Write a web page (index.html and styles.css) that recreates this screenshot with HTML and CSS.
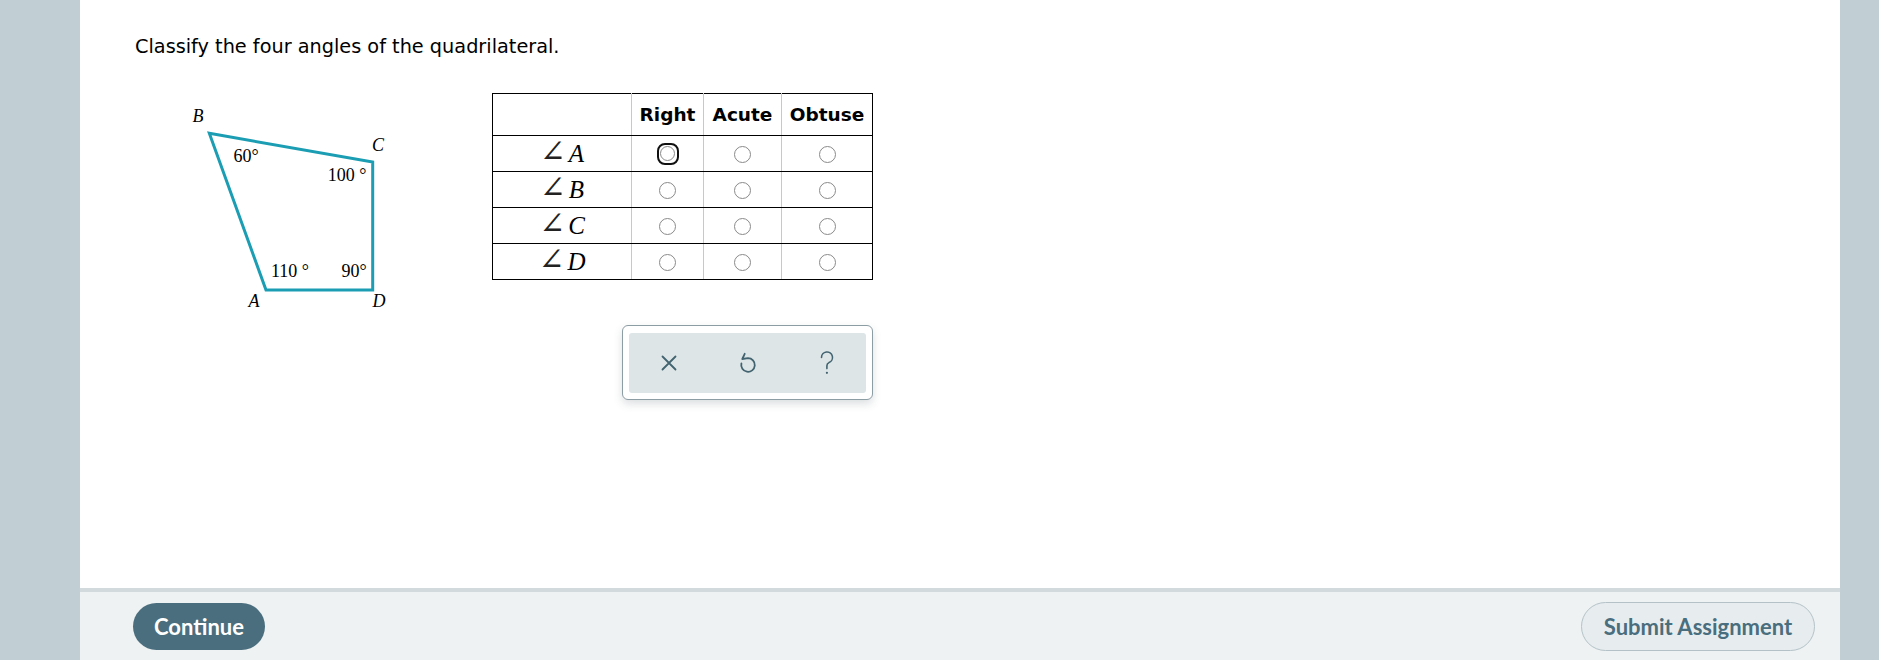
FILE: index.html
```html
<!DOCTYPE html>
<html>
<head>
<meta charset="utf-8">
<link rel="stylesheet" href="styles.css">
</head>
<body>
<div class="page">
  <div class="side side-left"></div>
  <div class="main">
    <div class="content">
      <p class="question">Classify the four angles of the quadrilateral.</p>
      <div class="work">
        <svg class="figure" width="300" height="220" viewBox="0 0 300 220">
          <polygon points="74.3,33.3 237.7,62 237.7,190 131,190" fill="none" stroke="#1b9db3" stroke-width="3" stroke-linejoin="miter"/>
          <g class="lbl">
            <text x="63" y="22" class="it">B</text>
            <text x="243" y="51" class="it">C</text>
            <text x="119" y="207" class="it">A</text>
            <text x="244" y="207" class="it">D</text>
            <text x="111" y="62">60°</text>
            <text x="212" y="81">100 °</text>
            <text x="155" y="177">110 °</text>
            <text x="219" y="177">90°</text>
          </g>
        </svg>
        <div class="answer">
          <table class="grid">
            <colgroup>
              <col class="c0"><col class="c1"><col class="c2"><col class="c3">
            </colgroup>
            <tr class="head">
              <th></th><th>Right</th><th>Acute</th><th>Obtuse</th>
            </tr>
            <tr>
              <td class="ang"><span class="sym">∠</span><i>A</i></td>
              <td><span class="focus"><span class="radio"></span></span></td>
              <td><span class="radio"></span></td>
              <td><span class="radio"></span></td>
            </tr>
            <tr>
              <td class="ang"><span class="sym">∠</span><i>B</i></td>
              <td><span class="radio"></span></td>
              <td><span class="radio"></span></td>
              <td><span class="radio"></span></td>
            </tr>
            <tr>
              <td class="ang"><span class="sym">∠</span><i>C</i></td>
              <td><span class="radio"></span></td>
              <td><span class="radio"></span></td>
              <td><span class="radio"></span></td>
            </tr>
            <tr>
              <td class="ang"><span class="sym">∠</span><i>D</i></td>
              <td><span class="radio"></span></td>
              <td><span class="radio"></span></td>
              <td><span class="radio"></span></td>
            </tr>
          </table>
          <div class="tools">
            <div class="tools-inner">
              <button class="tool" aria-label="Clear">
                <svg width="18" height="18" viewBox="0 0 18 18"><path d="M2.5 2.5 L15.5 15.5 M15.5 2.5 L2.5 15.5" stroke="#42636f" stroke-width="1.8" fill="none" stroke-linecap="round"/></svg>
              </button>
              <button class="tool" aria-label="Undo">
                <svg width="20" height="24" viewBox="0 0 20 24"><path d="M3.4 12.4 A6.8 6.8 0 1 0 10 7.2 L4.3 8 L6.7 2.8" stroke="#42636f" stroke-width="1.8" fill="none" stroke-linecap="round" stroke-linejoin="round"/></svg>
              </button>
              <button class="tool" aria-label="Help">
                <svg width="16" height="28" viewBox="0 0 16 28"><path d="M2.5 8.5 A5.5 5.5 0 1 1 10 13.6 C8.6 14.3 7.9 15.3 7.9 16.8 L7.9 19.6" stroke="#42636f" stroke-width="1.6" fill="none" stroke-linecap="round"/><circle cx="7.9" cy="23.8" r="1.1" fill="#42636f"/></svg>
              </button>
            </div>
          </div>
        </div>
      </div>
    </div>
    <div class="footer">
      <button class="btn btn-primary">Continue</button>
      <button class="btn btn-secondary">Submit Assignment</button>
    </div>
  </div>
  <div class="side side-right"></div>
</div>
</body>
</html>
```
FILE: styles.css
```css
html, body {
  margin: 0;
  padding: 0;
}
body {
  background: #c1ced4;
  font-family: "DejaVu Sans", Verdana, sans-serif;
  color: #000;
}
.page {
  display: flex;
  width: 1879px;
  height: 660px;
  overflow: hidden;
}
.side {
  background: #c1ced4;
  flex: none;
}
.side-left { width: 80px; }
.side-right { width: 39px; }
.main {
  width: 1760px;
  flex: none;
  display: flex;
  flex-direction: column;
  background: #fff;
}
.content {
  flex: 1;
  padding: 37px 0 0 55px;
}
.question {
  margin: 0;
  font-size: 19.3px;
  line-height: 20px;
}
.work {
  display: flex;
  align-items: flex-start;
  margin-top: 36px;
}
.figure {
  margin-top: 7px;
  flex: none;
}
.lbl text {
  font-family: "Liberation Serif", "Times New Roman", serif;
  font-size: 18px;
  text-anchor: middle;
  fill: #000;
}
.lbl .it {
  font-style: italic;
}
.answer {
  margin-left: 57px;
  display: flex;
  flex-direction: column;
  align-items: flex-end;
}
.grid {
  border-collapse: collapse;
  table-layout: fixed;
  width: 380px;
  border: 1px solid #000;
}
.c0 { width: 139px; }
.c1 { width: 72px; }
.c2 { width: 78px; }
.c3 { width: 91px; }
.grid th, .grid td {
  border-left: 1px solid #c8c8c8;
  border-right: 1px solid #c8c8c8;
  border-top: 1px solid #000;
  border-bottom: 1px solid #000;
  text-align: center;
  vertical-align: middle;
  padding: 0;
}
.grid th:first-child, .grid td:first-child { border-left: 1px solid #000; }
.grid th:last-child, .grid td:last-child { border-right: 1px solid #000; }
.grid th {
  height: 41px;
  font-size: 18.5px;
  font-weight: bold;
}
.grid td {
  height: 35px;
}
.ang {
  font-family: "Liberation Serif", serif;
  font-size: 25px;
  line-height: 1;
}
.ang .sym {
  font-family: "DejaVu Serif", serif;
  font-size: 31px;
  line-height: 20px;
  color: #222;
}
.ang i {
  font-style: italic;
  margin-left: 3px;
}
.radio {
  display: inline-block;
  width: 17px;
  height: 17px;
  border: 1px solid #8a8a8a;
  border-radius: 50%;
  vertical-align: middle;
  box-sizing: border-box;
  background: #fff;
}
.focus {
  display: inline-flex;
  align-items: center;
  justify-content: center;
  width: 22px;
  height: 22px;
  box-sizing: border-box;
  border: 2px solid #111;
  border-radius: 8px;
  vertical-align: middle;
}
.focus .radio {
  width: 15px;
  height: 15px;
}
.tools {
  margin-top: 45px;
  width: 251px;
  height: 75px;
  box-sizing: border-box;
  border: 1px solid #8c9da4;
  border-radius: 6px;
  background: #fff;
  padding: 7px 6px 6px 6px;
  box-shadow: 0 4px 8px rgba(60, 80, 90, 0.18);
}
.tools-inner {
  display: flex;
  height: 100%;
  background: #dde5e7;
  border-radius: 3px;
}
.tool {
  flex: 1;
  border: none;
  background: transparent;
  padding: 0;
  display: flex;
  align-items: center;
  justify-content: center;
}
.footer {
  height: 68px;
  flex: none;
  border-top: 4px solid #d2dadd;
  background: #eef2f3;
  display: flex;
  align-items: center;
  justify-content: space-between;
  padding: 0 25px 0 53px;
}
.btn {
  font-family: Lato, "Open Sans", sans-serif;
  font-weight: 700;
  font-size: 22px;
  border-radius: 25px;
  cursor: pointer;
  padding: 0;
}
.btn-primary {
  width: 132px;
  height: 47px;
  background: #4a6e7d;
  color: #fff;
  border: none;
  margin-top: 1px;
}
.btn-secondary {
  width: 234px;
  height: 49px;
  background: #e7edef;
  color: #4a6e7d;
  border: 1px solid #b4c2c7;
}
```
